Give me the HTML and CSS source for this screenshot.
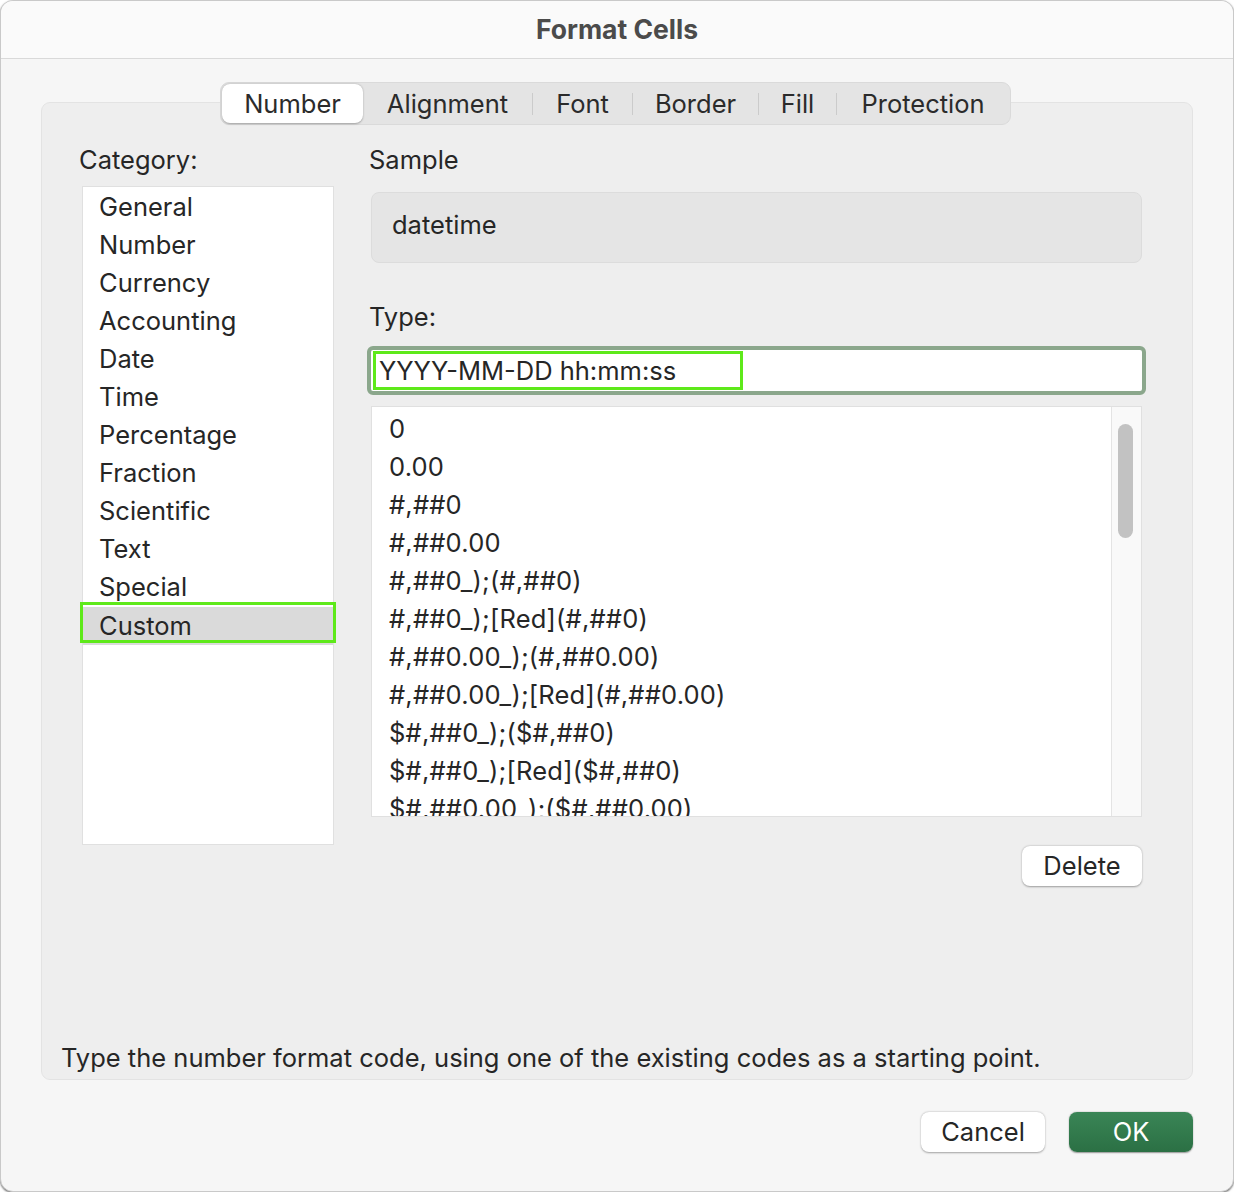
FILE: index.html
```html
<!DOCTYPE html>
<html>
<head>
<meta charset="utf-8">
<title>Format Cells</title>
<link rel="stylesheet" href="styles.css">
</head>
<body>
<div class="window">
  <div class="titlebar"><span class="title">Format Cells</span></div>
  <div class="content">
    <div class="tabs">
      <div class="tab tab-number selected">Number</div>
      <div class="tab tab-align">Alignment</div>
      <div class="sep"></div>
      <div class="tab tab-font">Font</div>
      <div class="sep"></div>
      <div class="tab tab-border">Border</div>
      <div class="sep"></div>
      <div class="tab tab-fill">Fill</div>
      <div class="sep"></div>
      <div class="tab tab-prot">Protection</div>
    </div>
    <div class="panel">
      <div class="columns">
        <div class="col-left">
          <div class="label label-cat">Category:</div>
          <div class="catlist">
            <div class="cat">General</div>
            <div class="cat">Number</div>
            <div class="cat">Currency</div>
            <div class="cat">Accounting</div>
            <div class="cat">Date</div>
            <div class="cat">Time</div>
            <div class="cat">Percentage</div>
            <div class="cat">Fraction</div>
            <div class="cat">Scientific</div>
            <div class="cat">Text</div>
            <div class="cat">Special</div>
            <div class="cat selected">Custom</div>
          </div>
        </div>
        <div class="col-right">
          <div class="label label-sample">Sample</div>
          <div class="sample">datetime</div>
          <div class="label label-type">Type:</div>
          <div class="typefield">
            <div class="typeinner"><span class="typetext">YYYY-MM-DD hh:mm:ss</span></div>
          </div>
          <div class="codelist">
            <div class="codes">
              <div class="code">0</div>
              <div class="code">0.00</div>
              <div class="code">#,##0</div>
              <div class="code">#,##0.00</div>
              <div class="code">#,##0_);(#,##0)</div>
              <div class="code">#,##0_);[Red](#,##0)</div>
              <div class="code">#,##0.00_);(#,##0.00)</div>
              <div class="code">#,##0.00_);[Red](#,##0.00)</div>
              <div class="code">$#,##0_);($#,##0)</div>
              <div class="code">$#,##0_);[Red]($#,##0)</div>
              <div class="code">$#,##0.00_);($#,##0.00)</div>
            </div>
            <div class="track"><div class="thumb"></div></div>
          </div>
          <div class="delete-row"><div class="btn btn-delete">Delete</div></div>
        </div>
      </div>
      <div class="hint">Type the number format code, using one of the existing codes as a starting point.</div>
    </div>
    <div class="buttons">
      <div class="btn btn-cancel">Cancel</div>
      <div class="btn btn-ok">OK</div>
    </div>
  </div>
</div>
</body>
</html>
```

FILE: styles.css
```css
* { box-sizing: border-box; }
html, body { margin: 0; padding: 0; background: #ffffff; }
body {
  font-family: Inter, "Liberation Sans", sans-serif;
  font-size: 25.5px;
  color: #262626;
}
.window {
  width: 1234px;
  height: 1192px;
  border: 1px solid #c9c9c9;
  border-radius: 13px;
  background: #f6f6f6;
  overflow: hidden;
  box-shadow: 0 1px 2px rgba(0,0,0,0.55);
}
.titlebar {
  height: 58px;
  background: #fafafa;
  border-bottom: 1px solid #d9d9d9;
  display: flex;
  align-items: center;
  justify-content: center;
  padding-bottom: 2px;
}
.title {
  font-weight: 700;
  font-size: 26.5px;
  color: #4b4b4b;
}
.content {
  padding-top: 23px;
}
.tabs {
  width: 791px;
  height: 43px;
  margin-left: 219px;
  background: #e4e4e4;
  border: 1px solid #dadada;
  border-radius: 9px;
  display: flex;
  align-items: center;
  padding: 0 1px;
  position: relative;
  z-index: 1;
}
.tab {
  height: 39px;
  display: flex;
  align-items: center;
  justify-content: center;
  color: #2b2b2b;
  flex: none;
}
.tab.selected {
  background: #ffffff;
  border-radius: 8px;
  box-shadow: 0 0.5px 2px rgba(0,0,0,0.3);
}
.tab-number { width: 141px; }
.tab-align { width: 169px; }
.tab-font { width: 99px; }
.tab-border { width: 125px; }
.tab-fill { width: 77px; }
.tab-prot { width: 172px; }
.sep {
  width: 1px;
  height: 22px;
  background: #cbcbcb;
  flex: none;
}
.panel {
  margin: -23px 0 0 40px;
  width: 1152px;
  height: 978px;
  background: #eeeeee;
  border: 1px solid #e3e3e3;
  border-radius: 9px;
  display: flex;
  flex-direction: column;
  padding-top: 42px;
}
.columns {
  display: flex;
  gap: 37px;
  padding-left: 40px;
}
.label {
  height: 30px;
  line-height: 30px;
}
.label-cat { margin-left: -3px; margin-bottom: 11px; }
.col-left { width: 252px; flex: none; }
.catlist {
  height: 659px;
  background: #ffffff;
  border: 1px solid #e0e0e0;
  padding: 1px 0 0 0;
}
.cat {
  height: 38px;
  line-height: 38px;
  padding-left: 16px;
}
.cat.selected {
  position: relative;
  background: #dadada;
  margin-top: 1px;
}
.cat.selected::after {
  content: "";
  position: absolute;
  left: -3px;
  right: -3px;
  top: -5px;
  bottom: 2px;
  border: 3px solid #5ee91a;
}
.col-right { width: 771px; flex: none; }
.label-sample { margin-left: -2px; }
.sample {
  margin-top: 17px;
  height: 71px;
  background: #e5e5e5;
  border: 1px solid #dcdcdc;
  border-radius: 8px;
  padding-left: 20px;
  padding-bottom: 6px;
  display: flex;
  align-items: center;
}
.label-type { margin-top: 39px; margin-left: -2px; }
.typefield {
  margin: 14px -4px 0 -4px;
  height: 49px;
  border: 4px solid #8ba78c;
  border-radius: 6px;
  background: #ffffff;
}
.typeinner {
  height: 41px;
  padding: 0 0 0 2px;
  display: flex;
  align-items: center;
}
.typetext {
  position: relative;
  padding: 0 3px 0 6px;
  height: 39px;
  line-height: 39px;
  width: 370px;
}
.typetext::after {
  content: "";
  position: absolute;
  inset: 0;
  border: 3px solid #5ee91a;
}
.codelist {
  margin-top: 11px;
  height: 411px;
  background: #ffffff;
  border: 1px solid #e0e0e0;
  display: flex;
}
.codes {
  flex: 1;
  overflow: hidden;
  padding: 3px 0 0 17px;
}
.code {
  height: 38px;
  line-height: 38px;
  white-space: nowrap;
  letter-spacing: 0.2px;
}
.track {
  width: 30px;
  flex: none;
  background: #f9f9f9;
  border-left: 1px solid #e4e4e4;
  padding: 17px 0 0 6px;
}
.thumb {
  width: 15px;
  height: 114px;
  border-radius: 8px;
  background: #c2c2c2;
}
.delete-row {
  display: flex;
  justify-content: flex-end;
  margin-top: 29px;
}
.btn {
  height: 40px;
  border-radius: 8px;
  background: #ffffff;
  box-shadow: 0 0.5px 2px rgba(0,0,0,0.35);
  display: flex;
  align-items: center;
  justify-content: center;
  padding-bottom: 2px;
}
.btn-delete { width: 120px; }
.hint {
  margin-top: auto;
  height: 30px;
  line-height: 30px;
  padding-left: 19px;
  margin-bottom: 6px;
}
.buttons {
  display: flex;
  justify-content: flex-end;
  gap: 24px;
  width: 1192px;
  margin-top: 32px;
}
.btn-cancel { width: 124px; }
.btn-ok {
  width: 124px;
  background: linear-gradient(#3a8556, #2b7044);
  color: #ffffff;
  box-shadow: 0 0.5px 1.5px rgba(0,0,0,0.4);
}
```
